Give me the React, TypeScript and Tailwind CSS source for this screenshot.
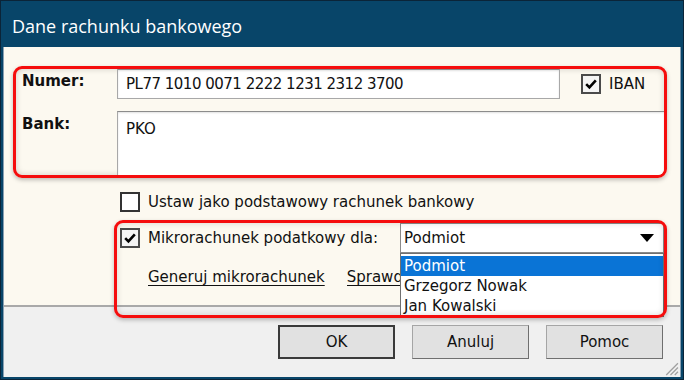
import React from 'react';

const CheckMark = () => (
    <svg viewBox="0 0 16 16" className="w-[14px] h-[14px]">
        <path d="M2.5 8.2 L6.2 11.8 L13.5 3.8" fill="none" stroke="#000" strokeWidth="3" />
    </svg>
);

const CheckBox: React.FC<{ checked?: boolean }> = ({ checked }) => (
    <span
        className={`w-[20px] h-[20px] shrink-0 flex items-center justify-center border-2 ${
            checked ? 'border-[#4a4a4a] bg-[#f4f4f4]' : 'border-[#333] bg-white'
        }`}
    >
        {checked && <CheckMark />}
    </span>
);

const Button: React.FC<{ label: string; primary?: boolean }> = ({ label, primary }) => (
    <button
        className={`w-[117px] h-[34px] bg-[#e1e1e1] text-[15px] text-[#111] ${
            primary
                ? 'border-2 border-[#3a3a3a]'
                : 'border border-[#a5a5a5] border-b-[#6f6f6f] border-r-[#6f6f6f]'
        }`}
    >
        {label}
    </button>
);

const App: React.FC = () => {
    const people = ['Podmiot', 'Grzegorz Nowak', 'Jan Kowalski'];

    return (
        <div className="w-[684px] h-[380px] bg-[#084569] border border-[#0b2438] px-[2px] pb-[2px] flex flex-col font-['DejaVu_Sans',sans-serif] text-[#111]">
            {/* title bar */}
            <div className="h-[46px] shrink-0 flex items-center pl-[9px] pt-[4px] font-['Open_Sans',sans-serif] text-[18px] text-white">
                Dane rachunku bankowego
            </div>

            <div className="flex-1 flex flex-col border-x border-[#8aa0b2]">
                {/* main form area */}
                <div className="h-[258px] bg-[#fcf9f0] flex flex-col">
                    {/* account / bank */}
                    <div className="mt-[19px] ml-[9px] w-[654px] h-[112px] border-[3px] border-[#f50d0d] rounded-[9px] shadow-[0_2px_4px_rgba(0,0,0,0.25),inset_0_0_6px_rgba(0,0,0,0.18)] flex flex-col pl-[6px]">
                        <div className="flex items-start h-[30px]">
                            <span className="w-[95px] pt-[1px] font-bold text-[15px]">Numer:</span>
                            <div className="w-[443px] h-[30px] bg-white border border-[#a8a8a8] border-t-[#8c8c8c] shadow-[inset_0_1px_2px_rgba(0,0,0,0.12)] flex items-center pl-[8px] text-[15px] tracking-[-0.5px]">
                                PL77 1010 0071 2222 1231 2312 3700
                            </div>
                            <div className="flex items-center gap-[8px] ml-[21px] mt-[4px] text-[15px]">
                                <CheckBox checked />
                                <span>IBAN</span>
                            </div>
                        </div>
                        <div className="flex items-start mt-[12px]">
                            <span className="w-[95px] pt-[2px] font-bold text-[15px]">Bank:</span>
                            <div className="flex-1 h-[64px] bg-white border border-[#a8a8a8] border-t-[#8c8c8c] border-r-0 border-b-0 rounded-br-[6px] shadow-[inset_0_1px_2px_rgba(0,0,0,0.12)] pl-[8px] pt-[6px] text-[15px]">
                                PKO
                            </div>
                        </div>
                    </div>

                    {/* default account */}
                    <div className="mt-[14px] ml-[116px] flex items-center gap-[8px] h-[20px] text-[15px]">
                        <CheckBox />
                        <span>Ustaw jako podstawowy rachunek bankowy</span>
                    </div>

                    {/* micro account */}
                    <div className="relative z-10 mt-[8px] ml-[110px] w-[553px] h-[85px]">
                        <div className="flex items-center pt-[3px] pl-[6px] pr-[3px] text-[15px]">
                            <CheckBox checked />
                            <span className="ml-[8px]">Mikrorachunek podatkowy dla:</span>
                            <div className="ml-auto w-[264px] h-[30px] bg-white border border-[#8a8a8a] flex items-center justify-between pl-[3px] pr-[9px]">
                                <span>Podmiot</span>
                                <svg viewBox="0 0 14 8" className="w-[14px] h-[8px]">
                                    <path d="M0 0 L14 0 L7 8 Z" fill="#000" />
                                </svg>
                            </div>
                        </div>
                        <div className="flex items-center gap-[22px] mt-[14px] pl-[34px] text-[15px] h-[20px]">
                            <span className="underline underline-offset-[3px] whitespace-nowrap">Generuj mikrorachunek</span>
                            <span className="w-[54px] overflow-hidden whitespace-nowrap underline underline-offset-[3px]">Sprawdź mikrorachunek</span>
                        </div>

                        {/* dropdown list */}
                        <div className="absolute left-[286px] top-[33px] w-[264px] bg-white border border-[#707070] pt-[2px] text-[15px]">
                            {people.map((p, i) => (
                                <div
                                    key={p}
                                    className={`h-[20px] leading-[20px] pl-[3px] ${
                                        i === 0 ? 'bg-[#0a74d6] text-white' : ''
                                    }`}
                                >
                                    {p}
                                </div>
                            ))}
                        </div>

                        {/* highlight frame */}
                        <div className="absolute left-0 top-0 w-[553px] h-[98px] border-[3px] border-[#f50d0d] rounded-[9px] shadow-[0_2px_4px_rgba(0,0,0,0.25),inset_0_0_6px_rgba(0,0,0,0.15)] pointer-events-none" />
                    </div>
                </div>

                {/* buttons */}
                <div className="relative flex-1 bg-[#f0f0f0] border-t-2 border-[#a9a9a9] flex justify-end gap-[17px] pt-[18px] pr-[17px]">
                    <Button label="OK" primary />
                    <Button label="Anuluj" />
                    <Button label="Pomoc" />
                    <svg viewBox="0 0 16 16" className="absolute right-[1px] bottom-[1px] w-[17px] h-[17px]">
                        <path d="M15 4 L4 15 M15 8 L8 15 M15 12 L12 15" stroke="#a0a0a0" strokeWidth="1.2" />
                    </svg>
                </div>
            </div>
        </div>
    );
};

export default App;
